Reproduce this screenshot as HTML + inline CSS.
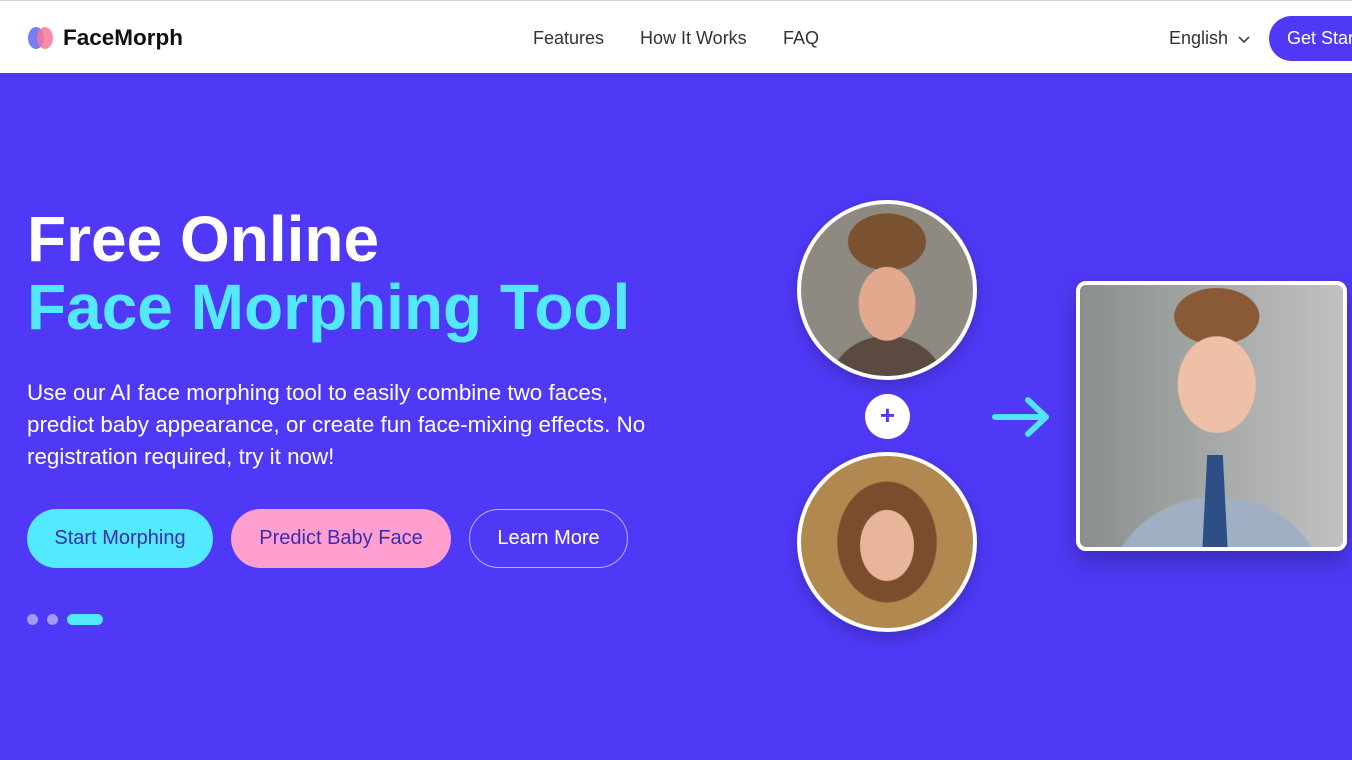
<!DOCTYPE html>
<html><head><meta charset="utf-8"><style>
*{margin:0;padding:0;box-sizing:border-box}
body{width:1352px;height:760px;overflow:hidden;font-family:"Liberation Sans",sans-serif;background:#4f39f6;position:relative}
.hdr{position:absolute;left:0;top:0;width:1352px;height:73px;background:#fff;border-top:1px solid #d0d0d0}
.logo{position:absolute;left:28px;top:26px;width:26px;height:22px}
.logo i{position:absolute;top:0;width:16px;height:22px;border-radius:50%}
.brand{position:absolute;left:63px;top:24px;font-size:22.5px;font-weight:bold;color:#111}
.nav{position:absolute;top:27px;font-size:18px;color:#333}
.btn{position:absolute;height:59px;top:509px;border-radius:30px;font-size:20px;line-height:59px;text-align:center}
.circ{position:absolute;border-radius:50%;border:4px solid #fff;overflow:hidden;box-shadow:0 6px 16px rgba(0,0,0,.2)}
</style></head><body>
<div class="hdr">
<div class="logo"><i style="left:0;background:#7b7cf0"></i><i style="left:9px;background:#f47a9a;opacity:.85"></i></div>
<div class="brand">FaceMorph</div>
<div class="nav" style="left:533px">Features</div>
<div class="nav" style="left:640px">How It Works</div>
<div class="nav" style="left:783px">FAQ</div>
<div class="nav" style="left:1169px">English <svg width="14" height="10" viewBox="0 0 14 10" style="margin-left:4px"><path d="M2 3l5 5 5-5" fill="none" stroke="#444" stroke-width="1.6"/></svg></div>
<div style="position:absolute;left:1269px;top:15px;width:140px;height:45px;border-radius:23px;background:#4f39f6;color:#fff;font-size:18px;line-height:45px;padding-left:18px">Get Started</div>
</div>
<div style="position:absolute;left:27px;top:205px;font-size:64px;font-weight:bold;color:#fff;line-height:68px">Free Online</div>
<div style="position:absolute;left:27px;top:273px;font-size:64px;font-weight:bold;color:#53e9fd;line-height:68px">Face Morphing Tool</div>
<div style="position:absolute;left:27px;top:377px;font-size:22.4px;color:#fff;line-height:32px;width:650px">Use our AI face morphing tool to easily combine two faces, predict baby appearance, or create fun face-mixing effects. No registration required, try it now!</div>
<div class="btn" style="left:27px;width:186px;background:#53eaff;color:#3a2cb0">Start Morphing</div>
<div class="btn" style="left:231px;width:220px;background:#ff9fcf;color:#3a2cb0">Predict Baby Face</div>
<div class="btn" style="left:469px;width:159px;border:1px solid #b8b0ff;color:#fff;line-height:57px">Learn More</div>
<div style="position:absolute;left:27px;top:614px;width:11px;height:11px;border-radius:50%;background:#a29bf5"></div>
<div style="position:absolute;left:47px;top:614px;width:11px;height:11px;border-radius:50%;background:#a29bf5"></div>
<div style="position:absolute;left:67px;top:614px;width:36px;height:11px;border-radius:6px;background:#53eaff"></div>
<div class="circ" style="left:797px;top:200px;width:180px;height:180px;background:radial-gradient(ellipse 40px 52px at 50% 58%,#e2a98e 0 70%,transparent 72%),radial-gradient(ellipse 55px 40px at 50% 22%,#7a5232 0 70%,transparent 72%),radial-gradient(ellipse 70px 60px at 50% 105%,#5a4a40 0 80%,transparent 82%),#8e8a82"></div>
<div style="position:absolute;left:865px;top:394px;width:45px;height:45px;border-radius:50%;background:#fff;color:#4f39f6;font-size:26px;font-weight:bold;text-align:center;line-height:43px">+</div>
<div class="circ" style="left:797px;top:452px;width:180px;height:180px;background:radial-gradient(ellipse 38px 50px at 50% 52%,#e8b49c 0 70%,transparent 72%),radial-gradient(ellipse 70px 85px at 50% 50%,#7a4e2c 0 70%,transparent 72%),#b08850"></div>
<svg style="position:absolute;left:990px;top:396px" width="62" height="42" viewBox="0 0 62 42"><path d="M5 21H56M38 4l18 17-18 17" fill="none" stroke="#53e3fb" stroke-width="6" stroke-linecap="round" stroke-linejoin="round"/></svg>
<div style="position:absolute;left:1076px;top:281px;width:271px;height:270px;border:4px solid #fff;border-radius:10px;overflow:hidden;box-shadow:0 10px 24px rgba(0,0,0,.25);background:radial-gradient(ellipse 55px 68px at 52% 38%,#efc0a8 0 70%,transparent 72%),radial-gradient(ellipse 60px 40px at 52% 12%,#8a5a36 0 70%,transparent 72%),radial-gradient(ellipse 130px 110px at 52% 115%,#9fb0c4 0 80%,transparent 82%),linear-gradient(90deg,#8a8e8c,#bfc2c0)">
<div style="position:absolute;left:122px;top:170px;width:26px;height:100px;background:#2d4f86;clip-path:polygon(20% 0,80% 0,100% 100%,0 100%)"></div></div>
</body></html>
